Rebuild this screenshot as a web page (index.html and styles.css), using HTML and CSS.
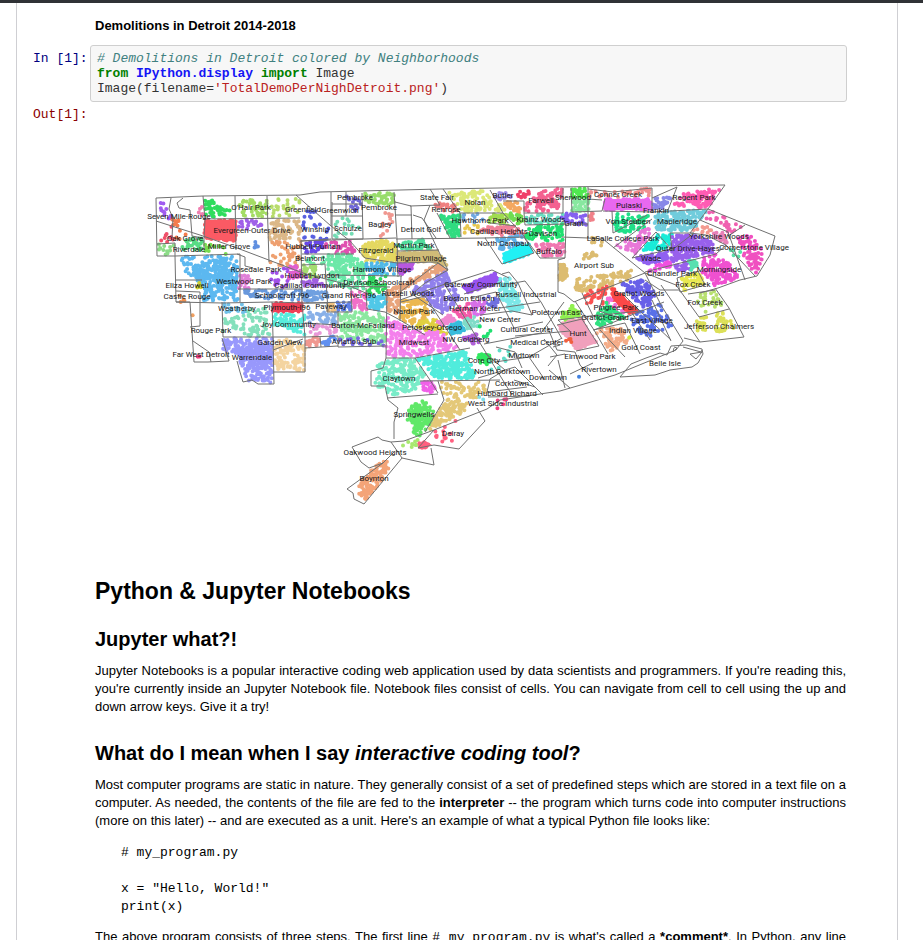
FILE: index.html
```html
<!DOCTYPE html>
<html lang="en">
<head>
<meta charset="utf-8">
<title>Demolitions in Detroit</title>
<link rel="stylesheet" href="styles.css">
</head>
<body>
<main class="notebook">
  <section class="cell">
    <div class="prose caption"><strong>Demolitions in Detroit 2014-2018</strong></div>
  </section>
  <section class="cell code-cell">
    <div class="prompt prompt-in">In&nbsp;[1]:</div>
    <pre class="input"><span class="comment"># Demolitions in Detroit colored by Neighborhoods</span>
<span class="keyword">from</span> <span class="module">IPython.display</span> <span class="keyword">import</span> Image
Image(filename=<span class="string">'TotalDemoPerNighDetroit.png'</span>)</pre>
  </section>
  <section class="cell output-cell">
    <div class="prompt prompt-out">Out[1]:</div>
    <svg class="map" id="map" viewBox="96 102 749 450" role="img" aria-label="Map of demolitions by neighborhood"></svg>
  </section>
  <section class="prose">
    <h1>Python &amp; Jupyter Notebooks</h1>
    <h2>Jupyter what?!</h2>
    <p>Jupyter Notebooks is a popular interactive coding web application used by data scientists and programmers. If you're reading this, you're currently inside an Jupyter Notebook file. Notebook files consist of cells. You can navigate from cell to cell using the up and down arrow keys. Give it a try!</p>
    <h2>What do I mean when I say <em>interactive coding tool</em>?</h2>
    <p>Most computer programs are static in nature. They generally consist of a set of predefined steps which are stored in a text file on a computer. As needed, the contents of the file are fed to the <strong>interpreter</strong> -- the program which turns code into computer instructions (more on this later) -- and are executed as a unit. Here's an example of what a typical Python file looks like:</p>
    <pre class="sample"># my_program.py

x = "Hello, World!"
print(x)</pre>
    <p>The above program consists of three steps. The first line <code># my_program.py</code> is what's called a <strong>*comment*</strong>. In Python, any line</p>
  </section>
</main>
<script src="map.js"></script>
</body>
</html>
```
FILE: styles.css
```css
* { box-sizing: border-box; }
html { height: 100%; overflow: hidden; }
body {
  height: 100%;
  margin: 0;
  overflow: hidden;
  border-top: 3px solid #303236;
  background: #fff;
  color: #000;
  font: 13px/18px "Liberation Sans", Arial, sans-serif;
}
.notebook {
  min-height: 100%;
  margin: 0 25px 0 16px;
  padding: 14px 50px 0 16px;
  border: solid #cfcfd3;
  border-width: 0 1px;
}
.prose { margin-left: 62px; margin-right: 1px; text-align: justify; }
.caption { margin-bottom: 10px; }
.code-cell { display: flex; }
.prompt {
  flex: none;
  width: 57px;
  padding-top: 5px;
  white-space: nowrap;
}
.prompt, pre, code { font-family: "Liberation Mono", "Courier New", monospace; font-size: 13px; }
.prompt-in { color: #000080; }
.prompt-out { color: #8b0000; padding-top: 4px; }
.input {
  flex: 1;
  margin: 0;
  padding: 5px 6px;
  border: 1px solid #cfcfcf;
  border-radius: 3px;
  background: #f7f7f7;
  color: #333;
  line-height: 15px;
}
.comment { color: #408080; font-style: italic; }
.keyword { color: #008000; font-weight: bold; }
.module { color: #1414f5; font-weight: bold; }
.string { color: #ba2121; }
.output-cell { display: grid; grid-template-columns: 63px 1fr; padding-right: 2px; }
.output-cell .prompt { height: 3px; }
.map {
  display: block;
  grid-column: 2;
  width: 100%;
}
.map text {
  fill: #181818;
  font: 400 8px Roboto, sans-serif;
  text-anchor: middle;
}
.borders { fill: none; stroke: #707070; stroke-width: 1; stroke-linejoin: round; }
.dots { fill: none; stroke-width: 4; stroke-linecap: round; }
h1, h2 { margin: 0; text-align: left; font-weight: bold; }
h1 { margin-top: 25px; font-size: 23px; line-height: 28px; }
h2 { margin: 22px 0 11px; font-size: 20px; line-height: 24px; }
p { margin: 0; }
p + h2 { margin-top: 25px; }
.sample { margin: 14px 26px 12px; line-height: 18px; }
p:last-child { text-align-last: justify; }
```
FILE: map.js
```js
// Each area: colour, coverage from 0 to 1, corner coordinates.
const areas = `
a05cf0 .6 159,202 164,202 172,218 166,221 160,210
f47c4c .85 172,217 180,220 180,228 172,226
f47c4c .2 175,227 189,229 189,240 176,240
f080b0 .6 197,206 203,206 203,216 197,215
f0506a .3 158,223 174,225 174,242 158,242
2edc5c .85 205,200 212,200 220,210 220,217 205,217
2edc5c .6 219,207 234,206 234,216 219,216
fb5a64 .98 205,220 236,220 236,242 204,238
8cdc88 .5 158,244 175,244 175,255 158,255
58dc84 .6 176,239 205,237 203,250 176,250
78dc50 .45 205,243 234,247 234,255 205,252
a4dc64 .4 237,198 255,198 255,216 237,216
a4dc64 .75 251,201 267,199 267,217 251,217
b8dc6c .4 269,198 300,197 300,217 269,217
a060e8 .6 237,219 266,219 266,226 237,231
dcb888 .75 269,220 300,220 300,240 269,240
6090e0 .8 254,242 259,242 259,248 254,248
eea070 .45 270,241 301,241 301,267 270,265
5cb8f0 .75 180,256 237,256 239,300 203,301 201,286 185,272
5cb8f0 .75 188,266 230,268 237,286 204,294
d0d030 .9 197,281 201,281 201,290 197,290
f09050 .35 177,292 186,292 186,302 177,302
e080d8 .9 240,275 250,276 250,290 238,289
a050e8 .4 270,268 289,268 289,288 270,288
6898dc .7 242,290 303,290 303,300 252,299
70c0e8 .6 223,304 249,304 249,313 223,313
84e0bc .55 223,318 242,316 252,308 271,308 271,336 223,336
f04058 .95 272,303 302,303 302,312 272,312
58ecdc .8 273,314 305,314 305,335 273,326
9898fc .9 223,338 272,338 273,350 267,370 240,366 238,354 223,350
9898fc .75 240,350 272,350 273,383 258,380 244,381
f4d4a0 .75 274,342 290,338 305,345 305,371 274,369
f04080 .6 196,356 201,356 201,362 196,362
f0a060 .2 191,308 195,308 195,320 191,320
98dc6c .75 363,193 394,193 394,207 363,202
7068d8 .55 346,196 361,199 361,214 348,208
5860e0 .3 302,203 312,206 330,226 330,240 302,240
74dcb4 .25 334,217 363,220 363,239 334,239
f09890 .4 385,211 395,211 395,227 380,237
6848e8 .8 304,243 323,241 323,251 304,254
e050b0 .6 324,241 352,241 356,256 324,252
e4d860 .9 360,246 377,240 397,240 397,262 365,262
6ce8a8 .85 325,254 350,254 365,262 365,275 328,275
6ce8a8 .4 302,256 325,254 325,265 302,264
a4dc70 .9 302,265 317,265 317,278 302,277
50dc9c .75 397,244 425,239 434,250 397,250
d0bc78 .99 397,252 437,251 448,266 435,262 397,262
50b8e8 .8 366,263 397,263 397,274 366,276
b858e0 .95 398,264 415,263 412,269 399,276
e060d0 .9 290,266 301,266 302,280 288,278
a060e0 .8 302,276 326,282 326,287 302,286
68e8a8 .65 328,276 365,276 365,292 328,286
30d860 .7 367,277 386,275 386,292 367,294
70a0e0 .9 303,291 328,291 328,298 303,302
f070c8 .85 351,292 366,292 367,310 352,310
50c8e8 .9 368,296 387,294 387,302 379,310 368,308
e8a47c .92 400,285 437,264 448,271 420,281 402,290
e8a47c .85 386,289 401,286 400,298 398,318 388,312
9080ec .8 417,285 447,271 461,300 443,313 425,302 412,294
ecb850 .85 402,301 424,297 433,315 412,325 400,319
e0d040 .9 414,325 435,316 447,334 430,333
6080e8 .85 337,302 351,302 351,311 337,311
f0c080 .9 328,303 336,303 336,311 328,311
88b0e8 .7 306,311 337,313 337,324 306,322
e898d8 .55 306,324 337,325 336,336 306,336
8ce8a0 .75 339,313 382,311 386,325 386,345 339,337
f09890 .85 306,337 320,337 320,345 306,347
6090f0 .7 321,338 337,336 337,345 321,346
7868e0 .4 339,336 385,341 385,346 339,346
f480ec .8 386,315 412,331 440,331 460,349 415,357 386,357
78ecc8 .8 376,366 386,360 415,358 426,376 415,390 393,396 375,385
50ecdc .9 417,359 442,354 465,350 477,378 438,380
f060e8 .9 421,382 432,382 438,393 424,392
e4c878 .65 438,382 482,382 488,392 470,401 447,402
e4c878 .9 445,402 468,400 464,412 430,430 429,421
60e868 .9 408,409 420,400 432,406 432,420 420,438 411,430
60e868 .5 405,410 434,410 432,427 408,422
a8e870 .4 396,444 418,438 417,445 404,450
ff6080 .95 418,444 424,440 432,445 421,449
ff6080 .4 432,430 450,424 453,442 437,443
ff6080 .3 446,425 477,410 480,412 462,420
f4a478 .85 380,461 390,461 390,467 376,488 366,502 356,494 361,481
f4a478 .35 389,460 397,465 373,493 367,490
dce878 .75 448,191 489,191 506,211 463,212
a090e8 .65 493,193 512,192 514,199 496,200
f4a860 .85 503,202 523,202 523,213 510,211
f46090 .75 525,205 545,189 562,188 562,210 525,212
f04068 .6 514,192 531,190 531,200 517,199
50e850 .9 572,188 584,188 590,197 572,198
88e8a0 .9 572,199 589,200 589,211 572,211
f08080 .7 432,203 456,203 458,212 439,213
30dc80 .9 440,215 460,215 460,237 449,236
e8c850 .5 462,223 479,223 479,237 462,235
70a8e0 .45 463,214 488,214 480,224 463,222
a0dc50 .8 493,214 510,215 510,226 485,224
70dc50 .9 507,213 524,214 524,224 516,224
f08098 .8 480,226 516,226 526,235 480,236
68dcc0 .7 526,214 563,214 563,224 526,223
20e070 .75 526,226 563,224 563,242 526,240
8460f0 .6 561,212 588,212 588,231 577,224 561,223
60b0e8 .8 495,239 523,235 524,245 500,251
20f0f4 .95 502,253 529,243 533,253 505,263
f078b0 .8 532,243 565,243 565,256 540,257
dcbc70 .95 560,263 565,263 569,277 558,282
dcbc70 .75 582,252 602,252 592,259 582,260
dcbc70 .75 575,279 632,270 633,279 605,290 575,292
dcbc70 .5 588,237 604,239 602,246 588,243
9854f0 .98 461,287 495,273 502,282 468,293
7ce8e8 .9 499,279 509,276 524,309 511,312 499,296
7070e0 .8 482,298 498,293 500,306 488,307
f45aa8 .8 450,306 470,302 471,319 456,317
d870e8 .9 470,302 486,301 484,314 471,316
f088d0 .98 437,322 450,314 456,320 443,326
38bcdc .95 447,326 461,321 465,331 451,336
80dcc8 .85 463,320 476,315 480,327 466,329
b060d8 .85 460,337 477,333 481,344 466,344
20e070 .3 478,325 491,327 490,336 480,338
30e860 .4 469,350 500,360 490,368 474,361
30e860 .9 479,353 490,355 489,364 479,360
60dcc8 .15 492,340 512,342 512,374 488,372
90f050 .8 558,315 575,304 582,318 564,321
f0a0bc .95 557,325 581,318 597,343 576,350
f09090 .55 588,189 618,192 650,188 650,197 588,197
e868f0 .98 605,199 650,199 652,210 604,210
8888e8 .85 653,198 673,196 665,209 652,210
f08088 .8 589,212 595,213 595,222 589,220
20e088 .75 614,213 649,216 643,231 614,233
e878d8 .75 616,245 655,224 648,238 635,256
18ecd8 .92 642,251 655,235 674,234 672,248
9060f0 .9 634,257 670,250 668,259 648,265
f050e0 .9 645,269 670,261 671,267 650,272
6860e8 .85 620,284 639,279 648,281 659,300 642,310
fb5050 .55 581,293 608,286 603,304 593,315
fb4848 .98 612,287 623,296 638,312 629,314 612,299
f070d8 .85 608,296 625,313 616,313 607,302
30e080 .9 597,315 606,302 625,318 595,328
f4ac88 .8 594,330 622,325 628,343 610,351
5870e8 .65 631,315 660,304 672,325 650,337 632,330
d8e840 .8 628,337 632,337 632,340 628,340
ff5cb4 .85 682,193 721,188 708,208 671,207
70ccdc .9 653,216 668,211 707,210 700,223 689,232 656,230
f060b0 .4 709,210 744,226 739,240 704,220
f49a90 .65 691,231 701,223 712,230 708,236
e880b8 .85 713,229 724,233 728,245 714,237
9860ec .92 672,235 693,235 714,242 713,253 690,259 671,262
f050c0 .75 737,235 750,234 765,252 756,274 744,260
58e0a8 .25 727,248 742,250 740,260 730,260
9860ec .9 674,265 687,261 692,270 678,271
58e0b0 .95 688,261 696,259 698,267 691,270
f050d0 .85 699,259 716,254 732,266 739,278 715,286 702,272
e8e850 .8 679,277 699,273 705,283 683,291
b8e070 .55 693,294 715,291 725,309 704,313
dce058 .85 696,317 708,317 706,332 697,331
dce058 .65 715,313 728,312 737,330 716,334
4080e0 .8 578,375 580,375 580,377 578,377
f06040 .9 566,339 572,339 572,342 566,342
80dce8 .5 477,395 484,397 484,403 477,400
f04080 .3 492,400 518,396 518,399 494,411`;

const borders = `
156,198 203,196 300,195 320,192 440,189 556,187 725,185 708,209 775,236 770,255 757,276 740,280 718,288 700,293
156,198 157,256 175,256 176,302 190,302 194,362 208,362 229,361
203,196 205,220 204,238 204,249
235,196 236,250
267,196 269,262
171,198 169,209 173,218 172,238
183,198 177,203 179,208 190,210 192,236 203,238
156,221 203,236 237,248 303,273 345,284 368,294
203,219 300,218
157,244 175,243 175,256 240,254 240,302
176,280 202,280
176,291 200,292 200,326 190,327
176,302 222,303 272,302 304,303
222,302 223,337 273,337 274,384 258,384 252,380 243,382 240,372 237,361
237,254 245,257 245,266 253,268
238,289 303,289
272,302 273,337 305,337 305,372 274,372
193,341 209,352 211,362
222,338 229,361
273,350 303,339
296,195 331,226 331,192
331,239 301,241 302,303 305,337
332,202 332,239 363,239 362,193
346,192 346,216
332,204 362,204
331,216 363,216
331,226 350,241 365,258 397,263
300,241 396,238
302,254 354,254
302,265 325,264 328,311
327,275 402,276
327,286 390,287
394,192 397,239 398,277
395,202 411,206 412,239
396,215 412,215
410,206 440,205 430,189
413,215 422,218 436,238
396,239 486,238
397,251 439,250
397,263 437,262 448,270
351,288 352,312 327,312 327,303 304,303
366,288 367,309 385,312 400,320 425,335
387,289 386,358
305,323 338,325 338,311
305,337 338,336 338,347 386,346
305,348 338,346
320,337 321,347
304,303 351,302
401,276 400,321
400,300 448,283
400,292 438,263 448,270 425,283 412,294 443,315
401,302 425,296 460,350
386,358 415,358 430,380 438,393
415,358 470,348
386,358 383,368 371,371 371,386 385,386 388,400 398,408 394,422 394,439
387,398 438,394
420,381 500,380
438,381 444,400 425,432
391,442 404,441 434,430 487,409 500,400 560,391 615,375 676,350 683,341
434,430 418,448 434,445 459,449 485,421 477,408
391,442 402,458 434,465 431,448
391,442 382,440 378,437 352,447 361,462 369,468 383,463 394,452
383,463 347,489 353,493 354,499 364,504 402,458
448,270 437,248 424,220 430,205
445,285 480,343 512,395
443,189 460,213 503,213 490,190
460,213 461,237
437,213 450,238
503,213 525,237 485,238 502,264 534,253 524,237
490,223 516,226
503,201 524,201 524,213 563,213 563,188
524,213 525,225 566,224 565,258 540,258 525,238
571,188 572,212 602,211 605,199
588,187 588,224
588,199 602,200
588,189 613,192 652,188 652,212 603,211
566,224 588,224 588,238 562,237
565,258 558,260 558,292 564,294 574,302 604,289 645,273
588,238 603,239 645,273 661,305 683,341
612,211 613,233 647,215
652,198 677,187 668,210
652,212 708,209
613,248 652,219
632,258 656,232 672,250 694,233
632,258 672,249 670,233 694,233
645,272 716,254 726,245 706,235 690,233 708,209
700,220 728,232 745,280
726,245 755,276
745,225 728,236
645,273 676,285 699,317
698,271 677,278 680,292 705,285 698,271
688,294 715,290
699,317 729,309
715,288 729,308 744,337 700,342 684,338
680,290 660,290 645,280
661,285 700,342
652,300 671,341
445,285 492,270 509,278
464,294 502,282
502,274 509,272 518,283 532,315
509,284 525,281 541,302 562,339
470,298 496,292 514,328
500,308 540,302
480,315 512,311 532,315
484,344 541,333 564,302
514,328 543,322
515,336 570,331 558,320 598,315
547,326 557,350 575,352 580,365 590,376
557,325 582,319 599,346 576,351
575,301 594,330 608,354
582,293 593,316 640,311 622,293
593,330 625,323 640,354
605,289 599,311 625,320
632,313 650,340
640,311 671,340
600,330 625,357
594,330 664,302
495,362 529,357 562,338
485,353 505,370 490,379 487,392
478,378 515,367 543,395
496,347 515,352 522,368
529,357 545,380
544,339 557,355 548,366
553,347 560,345
550,357 565,354
549,370 570,388
565,388 558,360
570,374 593,363
487,392 527,387
488,397 530,396
514,380 535,387
620,377 631,364 646,358 660,353 667,355 671,346 686,345 702,349 703,354 698,363 692,367 670,370 655,375 620,377
674,348 673,352 677,348 674,347
683,347 701,352 702,350
690,354 702,352 696,359 690,354`;

// Label text with the centre of its baseline.
const labels = `179,219 Seven Mile-Rouge|185,241 Oak Grove|189,252 Riverdale|229,249 Miller Grove|251,210 O'Hair Park|252,233 Evergreen-Outer Drive|303,212 Greenfield|340,213 Greenwich|355,200 Pembroke|379,210 Pembroke|315,232 Winship|348,231 Schulze|380,227 Bagley|437,200 State Fair|446,212 Renrose|421,232 Detroit Golf|475,205 Nolan|503,198 Butler|541,203 Farwell|573,200 Sherwood|618,197 Conner Creek|629,208 Pulaski|656,213 Frankin|694,200 Regent Park|677,224 Mapleridge|480,223 Hawthorne Park|541,222 Krainz Woods|574,226 Grant|628,224 Von Steuben|499,234 Cadillac Heights|543,236 Davison|623,241 LaSalle College Park|719,239 Yorkshire Woods|754,250 Cornerstone Village|688,251 Outer Drive-Hayes|503,246 North Campau|549,254 Buffalo|313,249 Hubbell-Puritan|310,261 Belmont|376,253 Fitzgerald|414,248 Martin Park|421,261 Pilgrim Village|256,272 Rosedale Park|312,278 Hubbell-Lyndon|382,272 Harmony Village|187,288 Eliza Howell|244,284 Westwood Park|310,288 Cadillac Community|379,285 Davison-Schoolcraft|282,298 Schoolcraft-I96|349,298 Grand River-I96|187,299 Castle Rouge|408,296 Russell Woods|237,311 Weatherby|287,310 Plymouth-I96|331,309 Paveway|481,287 Gateway Community|469,301 Boston Edison|526,297 Russell Industrial|594,268 Airport Sub|651,261 Wade|672,276 Chandler Park|719,272 Morningside|693,287 Fox Creek|705,305 Fox Creek|719,329 Jefferson Chalmers|639,296 Gratiot Woods|211,333 Rouge Park|288,327 Joy Community|363,328 Barton-McFarland|414,314 Nardin Park|475,311 Herman Kiefer|616,310 Pingree Park|605,320 Gratiot-Grand|557,315 Poletown East|652,323 East Village|500,322 New Center|432,330 Petoskey-Otsego|527,332 Cultural Center|578,336 Hunt|633,333 Indian Village|280,345 Garden View|354,344 Aviation Sub|414,345 Midwest|466,342 NW Goldberg|537,345 Medical Center|641,350 Gold Coast|201,357 Far West Detroit|252,360 Warrendale|484,363 Core City|524,358 Midtown|590,359 Elmwood Park|599,372 Rivertown|665,366 Belle Isle|399,381 Claytown|502,374 North Corktown|548,380 Downtown|512,386 Corktown|507,396 Hubbard Richard|503,406 West Side Industrial|414,417 Springwells|453,436 Delray|375,455 Oakwood Heights|374,481 Boynton`;

const map = document.getElementById("map");

function add(tag, attributes, text) {
  const node = document.createElementNS("http://www.w3.org/2000/svg", tag);
  for (const name in attributes) node.setAttribute(name, attributes[name]);
  if (text) node.textContent = text;
  map.append(node);
}

// Repeatable random numbers keep the scatter stable between loads.
let seed = 2018;
function random() {
  seed = (seed * 1664525 + 1013904223) % 4294967296;
  return seed / 4294967296;
}

function inside(x, y, points) {
  let result = false;
  points.forEach(([ax, ay], i) => {
    const [bx, by] = points[(i + points.length - 1) % points.length];
    if (ay > y !== by > y && x < (bx - ax) * (y - ay) / (by - ay) + ax) result = !result;
  });
  return result;
}

for (const row of areas.trim().split("\n")) {
  const [color, coverage, ...corners] = row.split(" ");
  const points = corners.map(pair => pair.split(",").map(Number));
  const xs = points.map(p => p[0]);
  const ys = points.map(p => p[1]);
  const left = Math.min(...xs), top = Math.min(...ys);
  const width = Math.max(...xs) - left, height = Math.max(...ys) - top;
  const tries = Math.ceil(-Math.log(1 - coverage) * width * height / 12);
  let path = "";
  for (let i = 0; i < tries; i++) {
    const x = left + random() * width, y = top + random() * height;
    if (inside(x, y, points)) path += `M${x.toFixed(1)} ${y.toFixed(1)}h.01`;
  }
  if (coverage > .94) add("polygon", { points: corners.join(" "), fill: "#" + color });
  add("path", { class: "dots", stroke: "#" + color, d: path });
}
for (const row of borders.trim().split("\n")) add("polyline", { class: "borders", points: row });
for (const row of labels.split("|")) {
  const space = row.indexOf(" ");
  const [x, y] = row.slice(0, space).split(",");
  add("text", { x, y }, row.slice(space + 1));
}
```
